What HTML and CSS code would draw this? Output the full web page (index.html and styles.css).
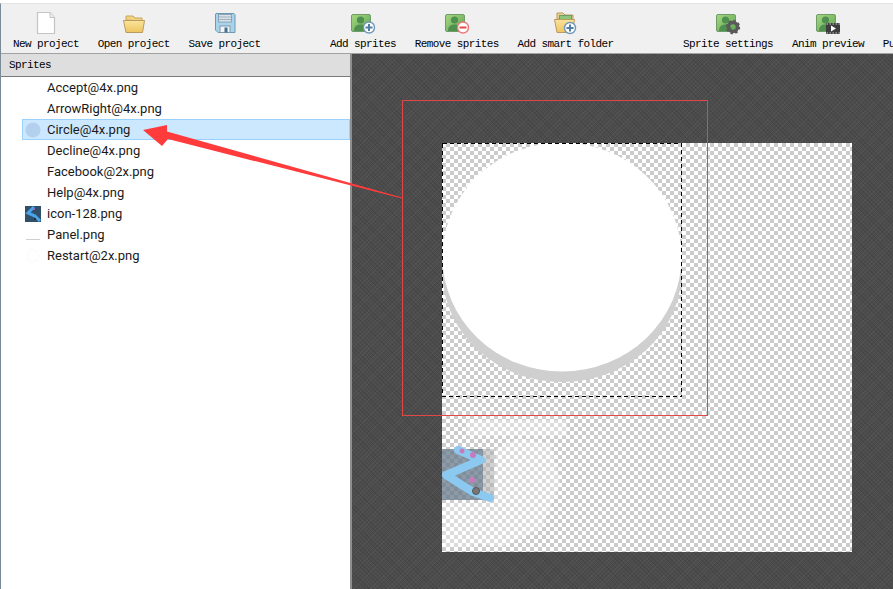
FILE: index.html
```html
<!DOCTYPE html>
<html lang="en">
<head>
    <meta charset="UTF-8">
    <title>Sprites</title>
    <link rel="stylesheet" href="styles.css">
</head>
<body>
    <svg class="defs" width="0" height="0">
        <defs>
            <linearGradient id="greenFill" x1="0" y1="0" x2="1" y2="1">
                <stop offset="0" stop-color="#a5d77f"/>
                <stop offset="1" stop-color="#5fa556"/>
            </linearGradient>
            <linearGradient id="folderFill" x1="0" y1="0" x2="0" y2="1">
                <stop offset="0" stop-color="#fbe39b"/>
                <stop offset="1" stop-color="#eec560"/>
            </linearGradient>
            <symbol id="photo" viewBox="0 0 28 24">
                <rect x="2.5" y="3.5" width="19" height="17" rx="1.5" fill="url(#greenFill)" stroke="#6f9c68"/>
                <circle cx="11.5" cy="9" r="3.6" fill="#4f8f4f"/>
                <path d="M5 20 C5 15 8 13.5 11.5 13.5 S18 15 18 20 Z" fill="#4f8f4f"/>
            </symbol>
            <symbol id="plusBadge" viewBox="0 0 28 24">
                <circle cx="20" cy="16.5" r="5.5" fill="#fff" stroke="#6f97b8" stroke-width="1.4"/>
                <path d="M20 13 V20 M16.5 16.5 H23.5" stroke="#4f7ea6" stroke-width="2"/>
            </symbol>
        </defs>
    </svg>

    <div class="app">
        <div class="toolbar">
            <div class="tool">
                <svg class="tool-icon" viewBox="0 0 28 24"><path d="M5.5 1.5 H18 L22.5 6.5 V22.5 H5.5 Z" fill="#fff" stroke="#c4c4c4" stroke-width="1.2"/><path d="M18 1.5 V6.5 H22.5" fill="#eee" stroke="#c4c4c4"/></svg>
                <span>New project</span>
            </div>
            <div class="tool">
                <svg class="tool-icon" viewBox="0 0 28 24"><path d="M6 9 V5 H13 L15 7 H22 V10 Z" fill="#f3d27f" stroke="#c7a65c"/><path d="M3.5 9.5 H24.5 L22.5 21.5 H6 Z" fill="url(#folderFill)" stroke="#b89a63"/></svg>
                <span>Open project</span>
            </div>
            <div class="tool">
                <svg class="tool-icon" viewBox="0 0 28 24"><path d="M5 2.5 H23 L24 3.5 V21.5 H7 L4.5 19 V3 Z" fill="#a9d3ea" stroke="#6d99b5"/><rect x="7.5" y="3.5" width="13" height="7.5" fill="#dbe3e8" stroke="#8aa4b5"/><path d="M8 6 H20 M8 8.5 H20" stroke="#9bb0bd"/><rect x="9" y="15" width="10" height="6.5" fill="#f2f5f7" stroke="#7d98aa"/><rect x="13.5" y="16.5" width="3" height="5" fill="#45708f"/></svg>
                <span>Save project</span>
            </div>

            <div class="tool group-start">
                <svg class="tool-icon" viewBox="0 0 28 24"><use href="#photo"/><use href="#plusBadge"/></svg>
                <span>Add sprites</span>
            </div>
            <div class="tool">
                <svg class="tool-icon" viewBox="0 0 28 24"><use href="#photo"/><circle cx="20" cy="16.5" r="5.5" fill="#fff" stroke="#ee7777" stroke-width="1.4"/><path d="M16.5 16.5 H23.5" stroke="#e24a4a" stroke-width="2"/></svg>
                <span>Remove sprites</span>
            </div>
            <div class="tool">
                <svg class="tool-icon" viewBox="0 0 28 24"><path d="M5 8 V2 H11 L13 4 H21 V9 Z" fill="#ecd28d" stroke="#b89a63"/><rect x="7.5" y="4.5" width="12" height="6" fill="#8fc77a" stroke="#6f9c68"/><path d="M2.5 8.5 H22.5 L20.5 21.5 H5 Z" fill="url(#folderFill)" stroke="#b89a63"/><use href="#plusBadge" x="-2" y="0.5"/></svg>
                <span>Add smart folder</span>
            </div>

            <div class="tool group-start">
                <svg class="tool-icon" viewBox="0 0 28 24"><use href="#photo"/><circle cx="19" cy="16" r="4.5" fill="none" stroke="#5a5a5a" stroke-width="3.4"/><circle cx="19" cy="16" r="6.2" fill="none" stroke="#5a5a5a" stroke-width="2" stroke-dasharray="2.4 2.4"/></svg>
                <span>Sprite settings</span>
            </div>
            <div class="tool">
                <svg class="tool-icon" viewBox="0 0 28 24"><use href="#photo"/><rect x="12" y="12" width="14" height="11" fill="#3d3d3d"/><path d="M12.5 13 H26 M12.5 22 H26" stroke="#ccc" stroke-dasharray="1.5 1.5"/><path d="M17 14.5 L22 17.5 L17 20.5 Z" fill="#fff"/></svg>
                <span>Anim preview</span>
            </div>
            <div class="tool">
                <svg class="tool-icon" viewBox="0 0 28 24"></svg>
                <span>Publish</span>
            </div>
        </div>

        <div class="main">
            <div class="sidebar">
                <div class="sidebar-title">Sprites</div>
                <ul class="sprite-list">
                    <li class="sprite"><span class="thumb"></span>Accept@4x.png</li>
                    <li class="sprite"><span class="thumb"></span>ArrowRight@4x.png</li>
                    <li class="sprite selected"><svg class="thumb" viewBox="0 0 16 16"><circle cx="8" cy="8" r="7.6" fill="#b4d0ef"/></svg>Circle@4x.png</li>
                    <li class="sprite"><span class="thumb"></span>Decline@4x.png</li>
                    <li class="sprite"><span class="thumb"></span>Facebook@2x.png</li>
                    <li class="sprite"><span class="thumb"></span>Help@4x.png</li>
                    <li class="sprite"><svg class="thumb" viewBox="0 0 16 16"><rect width="16" height="16" fill="#2f5068"/><path d="M9 1 L3 7 L10 10 L15 15" fill="none" stroke="#4aa3e8" stroke-width="3"/><circle cx="9" cy="3" r="1" fill="#c45fb4"/><circle cx="10" cy="13" r="1" fill="#222"/></svg>icon-128.png</li>
                    <li class="sprite"><svg class="thumb" viewBox="0 0 16 16"><rect x="1" y="12" width="14" height="1" fill="#cfcfcf"/></svg>Panel.png</li>
                    <li class="sprite"><svg class="thumb" viewBox="0 0 16 16"><circle cx="8" cy="8" r="6" fill="none" stroke="#fcfcfc" stroke-width="2"/></svg>Restart@2x.png</li>
                </ul>
            </div>

            <div class="canvas">
                <div class="stage">
                    <svg class="stage-art" viewBox="0 0 410 409">
                        <!-- pale sprites packed under the circle -->
                        <g fill="#fff" opacity="0.32">
                            <rect x="25" y="277" width="100" height="16"/>
                            <path d="M54 306 L75 296 L108 300 L118 340 L100 385 L60 404 L30 400 L52 360 Z"/>
                            <path d="M0 360 H50 L30 404 H0 Z"/>
                        </g>
                        <rect x="41" y="306" width="11" height="51" fill="#a8a8a8" opacity="0.5"/>
                        <rect x="0" y="306" width="41" height="51" fill="#65798a" opacity="0.75"/>
                        <path d="M16 307 L39 317 L4 332 L31 349 L48 355" fill="none" stroke="#8cc9f0" stroke-width="8" stroke-linejoin="round" stroke-linecap="round"/>
                        <circle cx="20" cy="308" r="2.5" fill="#c77bbd"/>
                        <circle cx="31" cy="312" r="3" fill="#c77bbd"/>
                        <circle cx="30" cy="337" r="3" fill="#c77bbd"/>
                        <circle cx="34" cy="348" r="3.5" fill="#777" stroke="#555"/>

                        <!-- the selected sprite -->
                        <ellipse cx="120" cy="129" rx="119.5" ry="110" fill="#cfcfcf"/>
                        <ellipse cx="120" cy="114" rx="119.5" ry="114.5" fill="#fff"/>
                        <rect class="sprite-bounds" x="0.5" y="0.5" width="239" height="253"/>
                    </svg>
                </div>
                <div class="red-frame"></div>
            </div>
        </div>
    </div>

    <svg class="arrow" viewBox="0 0 893 589">
        <path d="M143 130 L167 125 L167 131.5 L402 197.5 L402 198.5 L168 139 L162 146 Z" fill="#ff3b3b"/>
    </svg>
</body>
</html>
```

FILE: styles.css
```css
html, body {
    margin: 0;
    padding: 0;
    height: 100%;
    overflow: hidden;
    background: #fff;
}
.defs {
    position: absolute;
}
.app {
    height: 585px;
    margin-top: 3px;
    border-top: 1px solid #e4e4e4;
    border-left: 1px solid #7a8a96;
    display: flex;
    flex-direction: column;
}
.toolbar {
    height: 49px;
    flex: none;
    padding-left: 12px;
    display: flex;
    gap: 18.75px;
    background-color: #f0f0f0;
    border-bottom: 1px solid #a2a2a2;
    overflow: hidden;
}
.tool {
    flex: none;
    display: flex;
    flex-direction: column;
    align-items: center;
    font-family: "Liberation Mono", monospace;
    font-size: 11px;
    letter-spacing: -0.6px;
    color: #000;
    line-height: 13px;
}
.tool-icon {
    width: 28px;
    height: 24px;
    margin-top: 7px;
    margin-bottom: 3px;
    display: block;
}
.group-start {
    margin-left: 50.75px;
}
.main {
    flex: 1;
    display: flex;
    min-height: 0;
}
.sidebar {
    width: 349px;
    flex: none;
    background: #fff;
    border-right: 2px solid #8f8f8f;
}
.sidebar-title {
    height: 22px;
    line-height: 22px;
    padding-left: 8px;
    background-color: #dedede;
    border-bottom: 1px solid #7a7a7a;
    font-family: "Liberation Mono", monospace;
    font-size: 11px;
    letter-spacing: -0.6px;
}
.sprite-list {
    list-style: none;
    margin: 0;
    padding: 0 0 0 21px;
    font-family: Roboto, sans-serif;
    font-size: 13px;
    color: #1a1a1a;
}
.sprite {
    height: 21px;
    box-sizing: border-box;
    padding-left: 3px;
    border: 1px solid transparent;
    border-left-width: 0;
    border-right-width: 0;
    display: flex;
    align-items: center;
    gap: 6px;
    line-height: 19px;
}
.sprite.selected {
    background-color: #cce8ff;
    border: 1px solid #99d1ff;
    padding-left: 2px;
}
.thumb {
    width: 16px;
    height: 16px;
    flex: none;
    display: block;
}
.canvas {
    flex: 1;
    position: relative;
    overflow: hidden;
    background-color: #4c4c4c;
    background-image:
        repeating-linear-gradient(45deg, rgba(0, 0, 0, 0.09) 0 1px, transparent 1px 3px),
        repeating-linear-gradient(-45deg, rgba(255, 255, 255, 0.04) 0 1px, transparent 1px 3px);
}
.stage {
    position: absolute;
    left: 90px;
    top: 89px;
    width: 410px;
    height: 409px;
    background: conic-gradient(#cccccc 25%, #fff 0 50%, #cccccc 0 75%, #fff 0) 0 0 / 8px 8px;
}
.stage-art {
    display: block;
    width: 100%;
    height: 100%;
}
.sprite-bounds {
    fill: none;
    stroke: #000;
    stroke-dasharray: 4 3;
    shape-rendering: crispEdges;
}
.red-frame {
    position: absolute;
    left: 50px;
    top: 46px;
    width: 304px;
    height: 314px;
    border: 1px solid #e04848;
}
.arrow {
    position: absolute;
    left: 0;
    top: 0;
    width: 893px;
    height: 589px;
    pointer-events: none;
}
```
